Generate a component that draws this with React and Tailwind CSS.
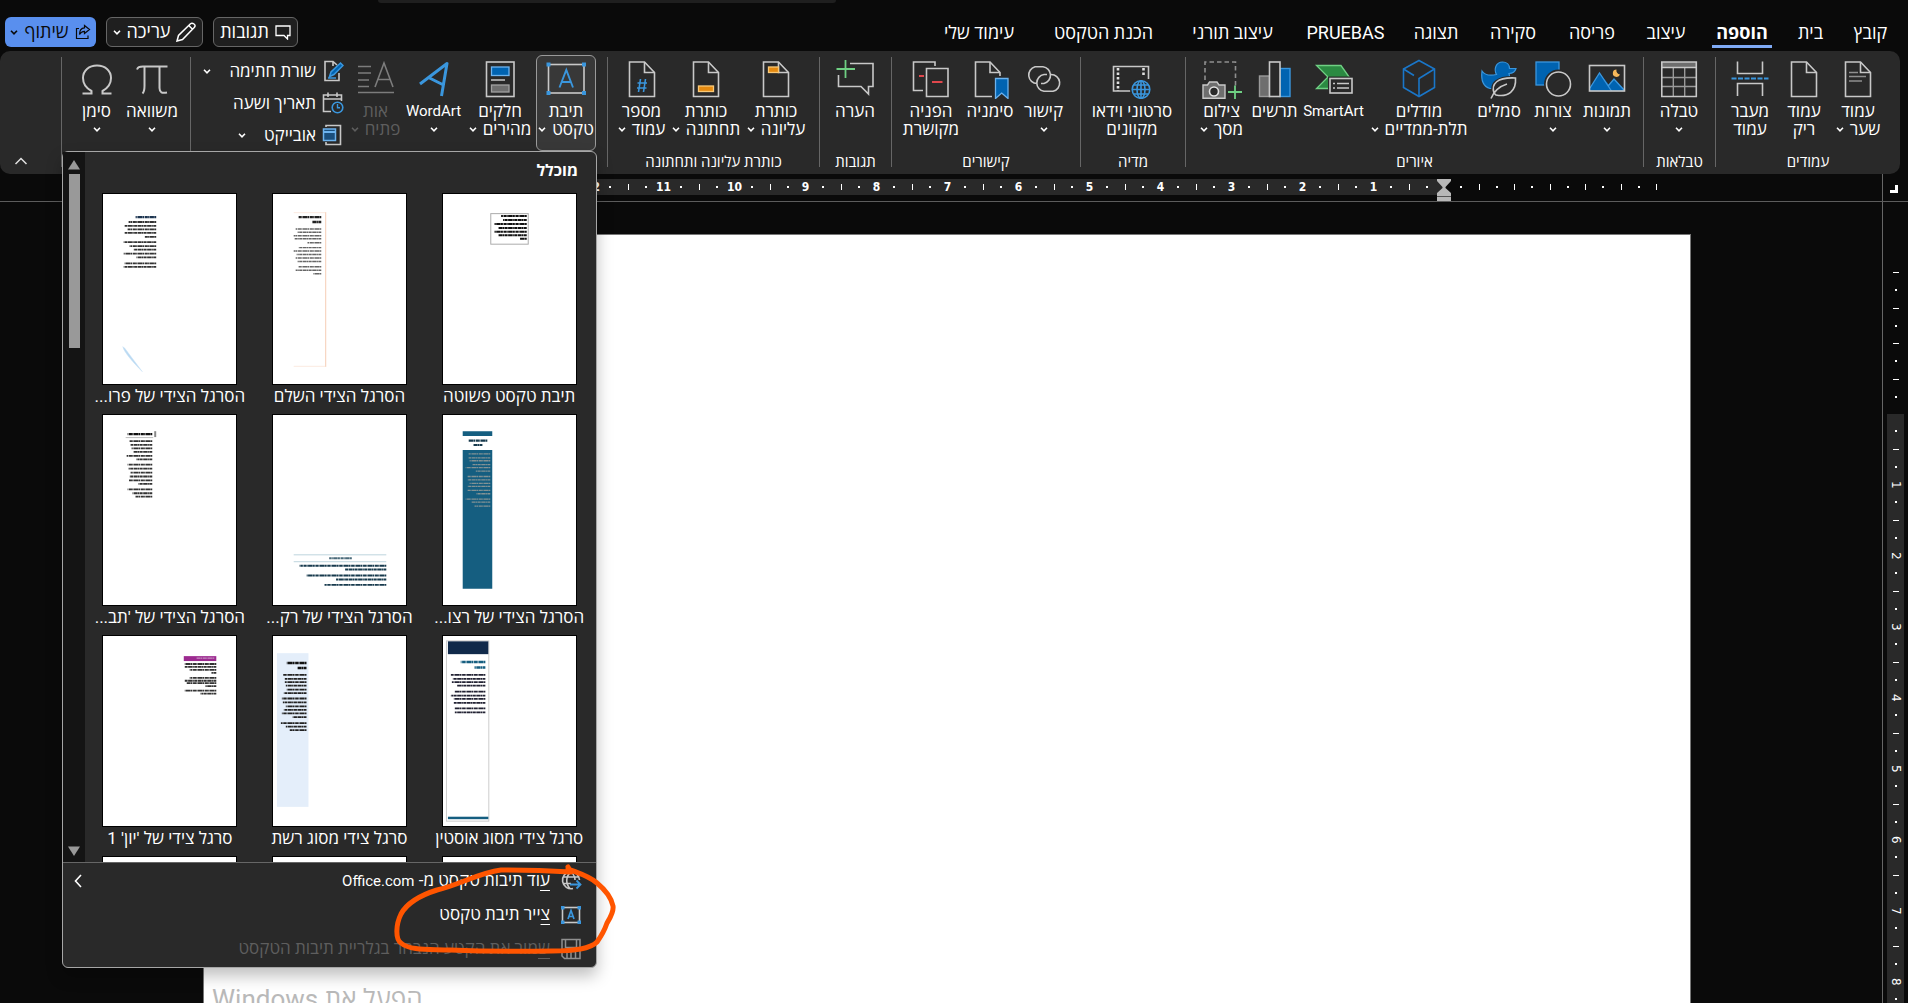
import React from "react";

const line = { fill: "none", stroke: "#c8c8c8", strokeWidth: 1.6 };
const blue = "#3a96dd";

const tabs = [
  { name: "קובץ", width: "w-[65px]" },
  { name: "בית", width: "w-[55px]" },
  { name: "הוספה", width: "w-[82px]", active: true },
  { name: "עיצוב", width: "w-[70px]" },
  { name: "פריסה", width: "w-[78px]" },
  { name: "סקירה", width: "w-[80px]" },
  { name: "תצוגה", width: "w-[74px]" },
  { name: "PRUEBAS", width: "w-[107px]" },
  { name: "עיצוב תורני", width: "w-[119px]" },
  { name: "הכנת הטקסט", width: "w-[139px]" },
  { name: "עימוד שלי", width: "w-[110px]" },
];

function Chevron() {
  return (
    <svg className="h-[5px] w-2 shrink-0" viewBox="0 0 8 5" aria-hidden="true">
      <path d="M1 .8 4 3.8 7 .8" fill="none" stroke="currentColor" strokeWidth="1.6" />
    </svg>
  );
}

function Icon({ children }) {
  return (
    <svg className="h-10 w-10 shrink-0" viewBox="0 0 40 40" aria-hidden="true">
      {children}
    </svg>
  );
}

function SmallIcon({ children }) {
  return (
    <svg className="h-[22px] w-[22px] shrink-0" viewBox="0 0 22 22" aria-hidden="true">
      {children}
    </svg>
  );
}

function Doc({ children }) {
  return (
    <Icon>
      <path d="M7.5 3H22.500L32.500 13.500V37.500H7.500Z" {...line} />
      <path d="M22.500 3V13.500H32.500" {...line} />
      {children}
    </Icon>
  );
}

const icons = {
  cover: (
    <Doc>
      <path d="M11 13.500H20M11 17.500H28M11 22H24" stroke="#8f8f8f" strokeWidth="1.600" />
    </Doc>
  ),
  blank: <Doc />,
  pageBreak: (
    <Icon>
      <path d="M7.500 2.500V14.500H32.500V2.500M7.500 37V24.500H32.500V37" {...line} />
      <path d="M1.500 19.500H38.500" stroke={blue} strokeWidth="1.800" strokeDasharray="5 1.500" />
    </Icon>
  ),
  table: (
    <Icon>
      <rect x="2.800" y="3" width="34.500" height="6" fill="#6e6e6e" />
      <path d="M14.300 9V37M25.700 9V37M3 18.500H37M3 27.500H37" stroke="#9a9a9a" strokeWidth="1.400" />
      <path d="M2.800 3H37.300V37.500H2.800ZM2.800 8.500H37.300" {...line} />
    </Icon>
  ),
  pictures: (
    <Icon>
      <path d="M3 32V29L12.500 14 22 26 27 20 37 30V32Z" fill="#0063b1" />
      <path d="M3 29 12.500 14 24.500 32M21.500 26.500 27 20 37 31" fill="none" stroke={blue} strokeWidth="1.300" />
      <path d="M29.500 10.500A3.700 3.700 0 1 0 33 15.500 4 4 0 0 1 29.500 10.500Z" fill="#f7b85a" />
      <rect x="2.500" y="6.500" width="35" height="25.500" {...line} />
    </Icon>
  ),
  shapes: (
    <Icon>
      <rect x="3" y="3" width="23" height="23" fill="#0063b1" stroke={blue} strokeWidth="1.300" />
      <circle cx="25.500" cy="25" r="12.500" fill="#292929" stroke="#292929" strokeWidth="4" />
      <circle cx="25.500" cy="25" r="12" {...line} />
    </Icon>
  ),
  symbols: (
    <Icon>
      <path d="M3 12C6 16.500 11 17 17.500 15.500 14.500 10 17 3 23.500 3 28 3 30.500 6 30.500 9.500L37 9.500C36 13 33.500 14.500 30 14.500 32 20 30 24 25 29.500H11C4 27.500 2 20 3 12Z" fill="#0063b1" stroke={blue} strokeWidth="1.200" />
      <path d="M15 34C12 25 18 18 36.500 19 37.500 32 29 38.500 17 36Z" fill="#292929" stroke="#292929" strokeWidth="4" />
      <path d="M15 34C12 25 18 18 36.500 19 37.500 32 29 38.500 17 36ZM12 39.500C15 32 20 27.500 28 25" {...line} />
    </Icon>
  ),
  models: (
    <Icon>
      <path d="M20 1.500 35.500 10V28.500L20 37.500 4.500 28.500V10Z" fill="none" stroke="#1a76c8" strokeWidth="1.600" />
      <path d="M35.500 10 20 19.500V37.500M4.500 10 15 16.500" fill="none" stroke="#1a76c8" strokeWidth="1.600" />
    </Icon>
  ),
  smartArt: (
    <Icon>
      <path d="M2.500 6.500H27L35.500 18.500 27 29.500H2.500L14 18Z" fill="#2b8a42" stroke="#6fd083" strokeWidth="1.300" />
      <rect x="14" y="17.500" width="26" height="18" fill="#292929" />
      <rect x="16" y="19.500" width="22" height="14.500" {...line} />
      <path d="M19 24.500H21M23 24.500H35M19 29H21M23 29H35" stroke="#c8c8c8" strokeWidth="1.400" />
    </Icon>
  ),
  chart: (
    <Icon>
      <rect x="4.500" y="17" width="10" height="20.500" fill="#6e6e6e" stroke="#9a9a9a" strokeWidth="1.400" />
      <rect x="25" y="9.500" width="10" height="28" fill="#0063b1" stroke={blue} strokeWidth="1.400" />
      <rect x="14.500" y="3" width="10.500" height="34.500" {...line} fill="#292929" />
    </Icon>
  ),
  screenshot: (
    <Icon>
      <path d="M3 21V3H33.500V27" fill="none" stroke="#8f8f8f" strokeWidth="1.600" strokeDasharray="4.500 3" />
      <path d="M1 26H5.500L7.500 23H15L17 26H23V39.300H1Z" fill="#6e6e6e" stroke="#c8c8c8" strokeWidth="1.400" />
      <circle cx="12" cy="32.500" r="4.500" fill="#292929" stroke="#e0e0e0" strokeWidth="1.600" />
      <path d="M33 26.500V40M26 33H40" stroke="#6fd083" strokeWidth="1.800" />
    </Icon>
  ),
  video: (
    <Icon>
      <path d="M19 32H1.500V7.500H36.500V20" {...line} />
      <path d="M6 9V32M31.500 9V18" stroke="#e0e0e0" strokeWidth="2.600" strokeDasharray="2.500 2" />
      <circle cx="29" cy="30.500" r="11" fill="#292929" />
      <g fill="none" stroke={blue} strokeWidth="1.600">
        <circle cx="29" cy="30.500" r="8.800" />
        <ellipse cx="29" cy="30.500" rx="4" ry="8.800" />
        <path d="M29 21.700V39.300M20.200 30.500H37.800M21.500 26H36.500M21.500 35H36.500" />
      </g>
    </Icon>
  ),
  link: (
    <Icon>
      <path d="M13 24.500A8.500 8.500 0 0 1 11 7.800H19A8.500 8.500 0 0 1 20 24.500H17" {...line} />
      <path d="M27 15.500A8.500 8.500 0 0 1 29 32.300H20A8.500 8.500 0 0 1 20 15.500H23" {...line} />
    </Icon>
  ),
  bookmark: (
    <Icon>
      <path d="M22 37.500H5.500V3H20L30 13.500V17" {...line} />
      <path d="M20 3V13.500H30" {...line} />
      <path d="M25.500 19.500H38V39.500L31.700 34 25.500 39.500Z" fill="#0063b1" stroke="#6db3ee" strokeWidth="1.300" />
    </Icon>
  ),
  crossRef: (
    <Icon>
      <path d="M12 31.500H2.500V3H24V7" {...line} />
      <path d="M15.500 9.500H37V37.500H15.500Z" {...line} />
      <path d="M8 17H13M21 23H31.500" stroke="#e0474c" strokeWidth="1.800" />
    </Icon>
  ),
  comment: (
    <Icon>
      <path d="M15 4.500H38V27.500H33.500V35L26 27.500H3.500V16" {...line} />
      <path d="M10.500 1V19M1.500 10H20" stroke="#6fd083" strokeWidth="1.800" />
    </Icon>
  ),
  header: (
    <Doc>
      <rect x="12.500" y="8" width="10" height="5.500" fill="#e58a10" stroke="#f8c878" strokeWidth="1.300" />
    </Doc>
  ),
  footer: (
    <Doc>
      <rect x="12.500" y="27" width="15" height="5.500" fill="#e58a10" stroke="#f8c878" strokeWidth="1.300" />
    </Doc>
  ),
  pageNumber: (
    <Doc>
      <path d="M18.500 20 16.500 33M23.500 20 21.500 33M15.500 24H25M15 29H24.500" stroke={blue} strokeWidth="1.600" />
    </Doc>
  ),
  textBox: (
    <Icon>
      <rect x="2.500" y="5.500" width="35.500" height="28.500" {...line} />
      <path d="M13.500 28.500 20.300 11 27 28.500M16 23H24.500" fill="none" stroke={blue} strokeWidth="1.900" />
      <path d="M.5 3.500h4v4h-4ZM36 3.500h4v4h-4ZM.5 32h4v4h-4ZM36 32h4v4h-4Z" fill={blue} />
    </Icon>
  ),
  quickParts: (
    <Icon>
      <rect x="6.500" y="3" width="27.500" height="34.500" {...line} />
      <rect x="11.500" y="8" width="17.500" height="8.500" fill="#0063b1" stroke="#6db3ee" strokeWidth="1.300" />
      <path d="M11 21H25" stroke="#c8c8c8" strokeWidth="1.500" />
      <rect x="11.500" y="26" width="17.500" height="7" fill="#6e6e6e" stroke="#a0a0a0" strokeWidth="1.300" />
    </Icon>
  ),
  wordArt: (
    <Icon>
      <path d="M6 25 33 4.500 27.500 37M14.500 18.500 29.500 26" fill="none" stroke={blue} strokeWidth="3" strokeLinejoin="round" />
    </Icon>
  ),
  dropCap: (
    <Icon>
      <path d="M2 7.500H15M2 14H15M2 21H13M2 27.500H13M2 33.500H38M19 28 28 4 37 28M22 20.500H34" fill="none" stroke="#7c7c7c" strokeWidth="1.600" />
    </Icon>
  ),
  equation: (
    <Icon>
      <path d="M5 10.500C6 8 7 7.500 11 7.500H35.500M12.500 7.500V27C12.500 31 12 33 10.500 34.500M27.500 7.500V29C27.500 33.500 30 34.500 35 33.500" {...line} strokeWidth="2" />
    </Icon>
  ),
  omega: (
    <Icon>
      <path d="M5.500 34.500H14.500V32C9 29 6 24.500 6 19 6 11.500 12 6.500 20 6.500S34 11.500 34 19C34 24.500 31 29 25.500 32V34.500H34.500" {...line} strokeWidth="2" />
    </Icon>
  ),
};

const groups = [
  {
    title: "עמודים",
    width: "w-[184px]",
    pad: "pr-[15px]",
    items: [
      { icon: "cover", lines: ["עמוד", "שער"], width: "w-[54px]", menu: true },
      { icon: "blank", lines: ["עמוד", "ריק"], width: "w-[54px]" },
      { icon: "pageBreak", lines: ["מעבר", "עמוד"], width: "w-[54px]" },
    ],
  },
  {
    title: "טבלאות",
    width: "w-[71px]",
    pad: "pr-[9px]",
    items: [{ icon: "table", lines: ["טבלה"], width: "w-[54px]", menu: true }],
  },
  {
    title: "איורים",
    width: "w-[457px]",
    pad: "pr-[9px]",
    items: [
      { icon: "pictures", lines: ["תמונות"], width: "w-[54px]", menu: true },
      { icon: "shapes", lines: ["צורות"], width: "w-[54px]", menu: true },
      { icon: "symbols", lines: ["סמלים"], width: "w-[54px]" },
      { icon: "models", lines: ["מודלים", "תלת-ממדיים"], width: "w-[106px]", menu: true },
      { icon: "smartArt", lines: ["SmartArt"], width: "w-[65px]", latin: true },
      { icon: "chart", lines: ["תרשים"], width: "w-[53px]" },
      { icon: "screenshot", lines: ["צילום", "מסך"], width: "w-[53px]", menu: true },
    ],
  },
  {
    title: "מדיה",
    width: "w-[104px]",
    pad: "pr-2",
    items: [{ icon: "video", lines: ["סרטוני וידאו", "מקוונים"], width: "w-[90px]" }],
  },
  {
    title: "קישורים",
    width: "w-[188px]",
    pad: "pr-[9px]",
    items: [
      { icon: "link", lines: ["קישור"], width: "w-[55px]", menu: true },
      { icon: "bookmark", lines: ["סימניה"], width: "w-[52px]" },
      { icon: "crossRef", lines: ["הפניה", "מקושרת"], width: "w-[66px]" },
    ],
  },
  {
    title: "תגובות",
    width: "w-[71px]",
    pad: "pr-2",
    items: [{ icon: "comment", lines: ["הערה"], width: "w-[56px]" }],
  },
  {
    title: "כותרת עליונה ותחתונה",
    width: "w-[211px]",
    pad: "pr-[9px]",
    items: [
      { icon: "header", lines: ["כותרת", "עליונה"], width: "w-[68px]", menu: true },
      { icon: "footer", lines: ["כותרת", "תחתונה"], width: "w-[72px]", menu: true },
      { icon: "pageNumber", lines: ["מספר", "עמוד"], width: "w-[57px]", menu: true },
    ],
  },
];

const textItems = [
  { icon: "textBox", lines: ["תיבת", "טקסט"], width: "w-[60px]", menu: true, open: true },
  { icon: "quickParts", lines: ["חלקים", "מהירים"], width: "w-[72px]", menu: true },
  { icon: "wordArt", lines: ["WordArt"], width: "w-[61px]", menu: true, latin: true },
  { icon: "dropCap", lines: ["אות", "פתיח"], width: "w-[55px]", menu: true, disabled: true },
];

const symbolItems = [
  { icon: "equation", lines: ["משוואה"], width: "w-[60px]", menu: true },
  { icon: "omega", lines: ["סימן"], width: "w-[51px]", menu: true },
];

function RibbonButton({ icon, lines, width, menu, open, disabled, latin }) {
  return (
    <button
      type="button"
      disabled={disabled}
      className={`flex h-24 shrink-0 flex-col items-center rounded-md border pt-[3px] whitespace-nowrap ${width} ${
        open ? "border-[#9a9a9a] bg-[#383838]" : "border-transparent"
      } ${disabled ? "text-[#5e5e5e]" : "text-white"}`}
    >
      {icons[icon]}
      <span className={`mt-[3px] leading-[18px] ${latin ? "text-[15px]" : "text-[17px]"}`}>{lines[0]}</span>
      <span className="flex h-[18px] items-center gap-1.5 text-[17px] leading-[18px]">
        {lines[1]}
        {menu && <Chevron />}
      </span>
    </button>
  );
}

function Divider() {
  return <div className="mt-1.5 mb-[7px] w-px shrink-0 bg-[#666]" />;
}

function Group({ title, width, pad, items, children }) {
  return (
    <div className={`flex shrink-0 flex-col pt-1 ${width}`}>
      <div className={`flex ${pad}`}>
        {items.map((item) => (
          <RibbonButton key={item.icon} {...item} />
        ))}
        {children}
      </div>
      {title && <div className="text-center text-[15px] leading-[22px] whitespace-nowrap">{title}</div>}
    </div>
  );
}

function SmallButton({ label, icon, menu }) {
  return (
    <button type="button" className="flex h-8 items-center text-[17px] leading-5 whitespace-nowrap">
      {icon}
      <span className="mr-1.5 ml-[18px]">{label}</span>
      {menu && <Chevron />}
    </button>
  );
}

function TitleBar() {
  return (
    <header className="flex h-12 items-start pt-3.5 pr-[5px] pl-[5px] text-lg">
      <nav className="flex">
        {tabs.map((tab) => (
          <button
            key={tab.name}
            type="button"
            className={`flex shrink-0 justify-center whitespace-nowrap ${tab.width} ${tab.active ? "font-bold" : ""}`}
          >
            <span
              className={`h-[31px] border-b-[3px] px-1 pt-[3px] leading-[25px] ${
                tab.active ? "border-[#7faaf5]" : "border-transparent"
              }`}
            >
              {tab.name}
            </span>
          </button>
        ))}
      </nav>
      <div className="mr-auto flex gap-2.5">
        <button type="button" className="flex h-[30px] w-[85px] items-center justify-center gap-1.5 rounded-md border border-[#666] bg-[#1f1f1f]">
          <svg className="h-4 w-4 shrink-0" viewBox="0 0 16 16" aria-hidden="true">
            <path d="M1 2H15V11.500H12.500V15L9 11.500H1Z" fill="none" stroke="#fff" strokeWidth="1.300" />
          </svg>
          תגובות
        </button>
        <button type="button" className="flex h-[30px] w-[97px] items-center justify-center gap-1.5 rounded-md border border-[#666] bg-[#1f1f1f]">
          <svg className="h-5 w-5 shrink-0" viewBox="0 0 20 20" aria-hidden="true">
            <path d="M1 19 2.500 13.500 14.500 1.800Q16 .500 18 2T18.200 5.500L6.500 17.500ZM12.800 3.500 16.500 7.200" fill="none" stroke="#fff" strokeWidth="1.500" />
          </svg>
          עריכה
          <Chevron />
        </button>
        <button type="button" className="flex h-[30px] w-[91px] items-center justify-center gap-1.5 rounded-md bg-[#598fee] text-[#0a0a0a]">
          <svg className="h-4 w-4 shrink-0" viewBox="0 0 16 16" aria-hidden="true">
            <path d="M4 4.500H1.500V14.500H13V11.500M9.500 1.500 14.500 5.500 9.500 9.500V7.300C7 7.300 5.500 8.500 4.500 10.500 4.500 6.500 6.500 4 9.500 3.800Z" fill="none" stroke="currentColor" strokeWidth="1.200" />
          </svg>
          שיתוף
          <Chevron />
        </button>
      </div>
    </header>
  );
}

function Ribbon() {
  return (
    <section className="mr-2 flex h-[123px] shrink-0 overflow-hidden rounded-[10px] bg-[#292929]">
      {groups.map((group) => (
        <React.Fragment key={group.title}>
          <Group {...group} />
          <Divider />
        </React.Fragment>
      ))}
      <Group items={textItems} width="w-[416px]" pad="pr-[11px]">
        <div className="flex flex-col items-start pr-1">
          <SmallButton
            label="שורת חתימה"
            menu
            icon={
              <SmallIcon>
                <path d="M17 13V20.500H3V1.500H11L15 5M11 1.500V6" {...line} />
                <path d="M7.500 16.500 9 12 18.500 3 21 5.500 12 14.500ZM6 18H14" fill="#0063b1" stroke={blue} strokeWidth="1.500" />
              </SmallIcon>
            }
          />
          <SmallButton
            label="תאריך ושעה"
            icon={
              <SmallIcon>
                <path d="M9 19.500H1.500V3H19.500V9M1.500 7H19.500M6 .5V5M15 .5V5" {...line} />
                <circle cx="15.500" cy="15.500" r="5.300" fill="#292929" stroke={blue} strokeWidth="1.600" />
                <path d="M15.500 12V15.800H18" fill="none" stroke={blue} strokeWidth="1.400" />
              </SmallIcon>
            }
          />
          <SmallButton
            label="אובייקט"
            menu
            icon={
              <SmallIcon>
                <path d="M4 3V1.500H18.500V20.500H4V18" {...line} />
                <rect x="1.500" y="5" width="12" height="11.500" fill="#1b4f7d" stroke="#6db3ee" strokeWidth="1.500" />
                <path d="M1.500 8H13.500" stroke="#6db3ee" strokeWidth="2" />
              </SmallIcon>
            }
          />
        </div>
      </Group>
      <Divider />
      <Group items={symbolItems} width="w-32" pad="pr-2" />
      <Divider />
      <button type="button" aria-label="כיווץ רצועת הכלים" className="mt-auto mr-auto mb-2 ml-3.5">
        <svg className="h-2.5 w-3.5" viewBox="0 0 14 10">
          <path d="M1.500 8 7 2.500 12.500 8" fill="none" stroke="#e0e0e0" strokeWidth="1.500" />
        </svg>
      </button>
    </section>
  );
}

function Mark({ kind, vertical, children }) {
  // every fourth mark is a pixel shorter so that one unit stays 71px long
  const last = kind === "number" || kind === "unit";
  const size = vertical ? (last ? "h-[17px] w-3.5" : "h-[18px] w-3.5") : last ? "w-[17px] h-4" : "w-[18px] h-4";
  const tick = vertical ? "h-px w-1.5" : "h-1.5 w-px";
  return (
    <span className={`flex shrink-0 items-center justify-center ${size}`}>
      {kind === "number" ? (
        <span className={vertical ? "[writing-mode:vertical-rl]" : ""}>{children}</span>
      ) : (
        <i className={`bg-white ${kind === "dot" ? "size-[2px]" : tick}`} />
      )}
    </span>
  );
}

function RulerUnit({ n, vertical }) {
  return (
    <>
      <Mark kind="dot" vertical={vertical} />
      <Mark kind="tick" vertical={vertical} />
      <Mark kind="dot" vertical={vertical} />
      <Mark kind="number" vertical={vertical}>
        {n}
      </Mark>
    </>
  );
}

function HorizontalRuler() {
  return (
    <div className="flex h-7 shrink-0 border-b border-[#5c5c5c]">
      <div className="flex w-[25px] items-start justify-center pt-[11px] pr-1">
        <i className="h-2 w-2 border-r-[3px] border-b-[3px] border-white" />
      </div>
      <div className="flex flex-1 overflow-hidden border-r border-[#666] pt-[5px] font-['DejaVu_Sans_Condensed','DejaVu_Sans',sans-serif] text-xs leading-4 font-bold">
        <div className="flex pr-[217px]">
          {/* the margin side mirrors the units, so it starts with the whole one */}
          {[1, 2, 3].map((n) => (
            <React.Fragment key={n}>
              <Mark kind="unit" />
              <Mark kind="dot" />
              <Mark kind="tick" />
              <Mark kind="dot" />
            </React.Fragment>
          ))}
        </div>
        <svg className="h-[22px] w-4 shrink-0" viewBox="0 0 16 22" aria-hidden="true">
          <rect width="9" height="16" fill="#292929" />
          <path d="M1 0H15V2L9.500 8V9L15 14V22H1V14L6.500 9V8L1 2Z" fill="#b8b8b8" />
          <path d="M1 17.500H15" stroke="#555" />
        </svg>
        <div className="flex h-4 bg-[#292929]">
          {Array.from({ length: 12 }, (_, i) => (
            <RulerUnit key={i} n={i + 1} />
          ))}
        </div>
      </div>
    </div>
  );
}

function VerticalRuler() {
  return (
    <div className="flex w-[25px] shrink-0 flex-col items-center overflow-hidden pt-[62px] font-['DejaVu_Sans'] text-xs leading-[14px]">
      <div className="flex w-[17px] flex-col items-center">
        {[1, 2].map((n) => (
          <React.Fragment key={n}>
            <Mark kind="unit" vertical />
            <Mark kind="dot" vertical />
            <Mark kind="tick" vertical />
            <Mark kind="dot" vertical />
          </React.Fragment>
        ))}
      </div>
      <div className="mt-2 flex w-[17px] flex-col items-center bg-[#292929] pt-2">
        {Array.from({ length: 8 }, (_, i) => (
          <RulerUnit key={i} n={i + 1} vertical />
        ))}
        <Mark kind="dot" vertical />
      </div>
    </div>
  );
}

// greeked body text, rows are [y, left, right]
function Greek({ rows, color = "#333", weight = 1.8 }) {
  return (
    <g stroke={color} strokeWidth={weight} fill="none">
      {rows.map(([y, x1, x2], i) => (
        <path
          key={y}
          d={`M${x2} ${y}H${x1}`}
          strokeDasharray={i % 2 ? "3 .4 1.500 .3 4 .5" : "2 .3 4.500 .4 1 .3 3 .6"}
        />
      ))}
    </g>
  );
}

const previews = {
  simple: (
    <>
      <rect x="48.500" y="19.500" width="38" height="31" fill="none" stroke="#aaa" />
      <Greek color="#111" weight={2} rows={[[22, 59, 85], [26, 61, 85], [30, 52, 85], [34, 56, 85], [38, 52, 85], [41.5, 56, 85], [45, 78, 85]]} />
    </>
  ),
  full: (
    <>
      <path d="M21 18.500H53M21 174.500H53" stroke="#fbeae0" />
      <path d="M53.500 18V175" stroke="#f6cdb4" />
      <Greek color="#222" weight={2.4} rows={[[23, 26, 49], [28, 40, 49]]} />
      <Greek color="#666" weight={1.5} rows={[[35, 23, 49], [38.5, 25, 49], [42, 21, 49], [45, 22, 49], [49, 35, 49], [54, 26, 49], [57.5, 21, 49], [61, 24, 49], [64.5, 23, 49], [68, 25, 49], [73.5, 26, 49], [77, 23, 49], [80.5, 41, 49]]} />
    </>
  ),
  facet: (
    <>
      <Greek color="#1c3450" weight={2.2} rows={[[23, 33, 54]]} />
      <Greek rows={[[28, 26, 54], [32, 22, 54], [35.5, 25, 54], [39, 22, 54], [43, 42, 54], [48.500, 21, 54], [52.500, 27, 54], [56, 31, 54], [60, 21, 54], [64, 34, 54], [70, 22, 54], [73.500, 21, 54]]} />
      <path d="M20 154.500 22 156 40 180Q22 162 20 154.500Z" fill="#b9d9f2" stroke="#cfe4f6" strokeWidth=".5" />
    </>
  ),
  stripes: (
    <>
      <path d="M20 16H50V21H20ZM20 35H50V176H20Z" fill="#155e80" />
      <Greek color="#173a4d" weight={2.2} rows={[[25.5, 26, 45], [30, 31, 40]]} />
      <Greek color="#839294" weight={1.3} rows={[[39, 26, 48], [43, 26, 48], [46, 27, 48], [50, 30, 48], [53, 23, 48], [56.5, 33, 48], [62, 25, 48], [65.5, 25, 48], [69, 27, 48], [72, 25, 48], [76, 25, 48], [79.5, 34, 48], [85, 23, 48], [88, 29, 48], [92, 32, 48]]} />
    </>
  ),
  strip: (
    <>
      <path d="M21 141.500H115M21 148.500H115" stroke="#bcd3dc" />
      <Greek color="#4a6a7a" weight={2} rows={[[145, 57, 80]]} />
      <Greek color="#173a4d" weight={2} rows={[[152.500, 27, 115], [156.500, 73, 115], [162.500, 34, 115], [166.500, 64, 115], [172, 52, 115]]} />
    </>
  ),
  thick: (
    <>
      <path d="M23 22.500H51" stroke="#bbb" />
      <rect x="52" y="16" width="2" height="6" fill="#888" />
      <Greek color="#111" weight={2.2} rows={[[19, 25, 50]]} />
      <Greek rows={[[26, 27, 50], [30, 28, 50], [33.500, 29, 50], [37, 31, 50], [41, 24, 50], [44.500, 34, 50], [50, 25, 50], [54, 26, 50], [58, 28, 50], [62, 27, 50], [66, 26, 50], [69.500, 36, 50], [75, 25, 50], [79, 30, 50], [82.500, 33, 50]]} />
    </>
  ),
  austin: (
    <>
      <rect x="3.500" y="4.500" width="43" height="183" fill="none" stroke="#ccc" />
      <rect x="5" y="5" width="41" height="13" fill="#10294a" />
      <rect x="5" y="183" width="41" height="2.500" fill="#155e80" />
      <Greek color="#155e80" weight={2.6} rows={[[26, 18, 43], [31.500, 32, 43]]} />
      <Greek color="#223" rows={[[39, 8, 43], [43, 10, 43], [46.500, 9, 43], [50, 14, 43], [56, 12, 43], [60, 8, 43], [63.500, 11, 43], [67.500, 11, 43], [73, 12, 43], [77, 12, 43]]} />
    </>
  ),
  grid: (
    <>
      <rect x="4" y="17" width="32" height="156" fill="#e4eefa" />
      <Greek color="#111" weight={2.4} rows={[[27, 14, 34], [32, 25, 34]]} />
      <Greek color="#222" rows={[[39, 10, 34], [43, 12, 34], [46.500, 12, 34], [50, 13, 34], [54, 14, 34], [57.500, 11, 34], [63, 9, 34], [67, 10, 34], [71, 13, 34], [74.500, 11, 34], [78, 9, 34], [82, 20, 34], [88, 8, 34], [91.500, 13, 34], [95, 17, 34]]} />
    </>
  ),
  ion: (
    <>
      <rect x="82" y="20" width="33" height="5" fill="#9c2a90" />
      <Greek color="#c58fc0" weight={1.3} rows={[[22, 95, 113]]} />
      <Greek rows={[[28, 83, 115], [31, 83, 115], [34, 88, 115], [37, 110, 115], [42, 88, 115], [45, 83, 115], [47.500, 85, 115], [50.500, 104, 115], [55, 83, 115], [58, 99, 115]]} />
    </>
  ),
};

const gallery = [
  { label: "תיבת טקסט פשוטה", preview: "simple" },
  { label: "הסרגל הצידי השלם", preview: "full" },
  { label: "הסרגל הצידי של פרו...", preview: "facet" },
  { label: "הסרגל הצידי של רצו...", preview: "stripes" },
  { label: "הסרגל הצידי של רק...", preview: "strip" },
  { label: "הסרגל הצידי של 'תב...", preview: "thick" },
  { label: "סרגל צידי מסוג אוסטין", preview: "austin" },
  { label: "סרגל צידי מסוג רשת", preview: "grid" },
  { label: "סרגל צידי של 'יון' 1", preview: "ion" },
  { label: "" },
  { label: "" },
  { label: "" },
];

function Gallery() {
  return (
    <div className="flex h-[710px] overflow-hidden">
      <div className="flex flex-1 flex-col">
        <h2 className="h-[41px] shrink-0 pr-[18px] text-base leading-[37px] font-bold">מוכלל</h2>
        <div className="grid grid-cols-3 pr-0.5">
          {gallery.map((item, i) => (
            <button key={i} type="button" className="flex h-[221px] flex-col items-center">
              <svg className="h-48 w-[135px] shrink-0 border border-black bg-white" viewBox="0 0 135 192" aria-hidden="true">
                {previews[item.preview]}
              </svg>
              <span className="text-[17px] leading-[22px] whitespace-nowrap">{item.label}</span>
            </button>
          ))}
        </div>
      </div>
      <div className="flex w-[22px] flex-col items-center bg-[#141414] pt-2 pb-1.5">
        <svg className="h-2.5 w-3" viewBox="0 0 12 10" aria-hidden="true">
          <path d="M6 0 12 9.500H0Z" fill="#999" />
        </svg>
        <div className="mt-1 h-[174px] w-[11px] bg-[#999]" />
        <svg className="mt-auto h-2.5 w-3" viewBox="0 0 12 10" aria-hidden="true">
          <path d="M6 10 12 .5H0Z" fill="#999" />
        </svg>
      </div>
    </div>
  );
}

function TextBoxMenu() {
  return (
    <div className="absolute top-[151px] left-[62px] w-[535px] rounded-md border border-[#a6a6a6] bg-[#292929] shadow-[0_8px_16px_rgba(0,0,0,0.25)]">
      <Gallery />
      <div className="border-t border-[#666] py-px text-[17px]">
        <button type="button" className="flex h-[34px] w-full items-center pr-3.5">
          <SmallIcon>
            <path d="M13 18.500A8.500 8.500 0 1 1 19.500 10M11 2C5.500 6 5.500 14 10 18.500M11 2C14 4.500 15 7 15 10M3 7H19M3 13.500H11" {...line} />
            <path d="M10 14.500H20M16.500 10.500 20.500 14.500 16.500 18.500" fill="none" stroke={blue} strokeWidth="1.800" />
          </SmallIcon>
          <span className="mr-2.5">
            <u className="underline-offset-4">ע</u>וד תיבות טקסט מ- <span className="text-[15px]">Office.com</span>
          </span>
          <svg className="mr-auto ml-[11px] h-3.5 w-2" viewBox="0 0 8 14" aria-hidden="true">
            <path d="M7 1 1.500 7 7 13" fill="none" stroke="#fff" strokeWidth="1.600" />
          </svg>
        </button>
        <button type="button" className="flex h-[34px] w-full items-center pr-3.5">
          <SmallIcon>
            <rect x="2.500" y="3.500" width="17" height="15" {...line} />
            <path d="M8 15 11 6.500 14 15M9 12.500H13" fill="none" stroke={blue} strokeWidth="1.700" />
            <path d="M1 2h3.500v3.500H1ZM17.500 2H21v3.500h-3.500ZM1 16.500h3.500V20H1ZM17.500 16.500H21V20h-3.500Z" fill={blue} />
          </SmallIcon>
          <span className="mr-2.5">
            <u className="underline-offset-4">צ</u>ייר תיבת טקסט
          </span>
        </button>
        <button type="button" disabled className="flex h-[34px] w-full items-center pr-3.5 text-[#5e5e5e]">
          <SmallIcon>
            <path d="M2 1.500H20V20.500H4.500L2 18ZM5.500 1.500V9.500H16.500V1.500M7 20.500V13.500H15.500V20.500M11 14V20.500" fill="none" stroke="#8f8f8f" strokeWidth="1.500" />
          </SmallIcon>
          <span className="mr-2.5">
            <u className="underline-offset-4">ש</u>מור את הקטע הנבחר בגלריית תיבות הטקסט
          </span>
        </button>
      </div>
      <svg className="pointer-events-none absolute top-[709px] left-[328px] h-24 w-[230px]" viewBox="391 861 230 96" aria-hidden="true">
        <path
          d="M568 867 571 872Q535 870 501 870C478 873 462 884 437 890 418 896 407 903 401 914 396 924 395 939 401 943 410 951 430 949 450 950Q500 952 552 951C575 951 590 949 597 942 602 935 605 929 607 923 610 918 614 912 613 906 611 896 603 888 597 883 589 876 578 873 568 869"
          fill="none"
          stroke="#ff5500"
          strokeWidth="5"
          strokeLinecap="round"
          strokeLinejoin="round"
        />
      </svg>
    </div>
  );
}

export default function App() {
  return (
    <div
      dir="rtl"
      className="relative flex h-screen flex-col overflow-hidden bg-[#0a0a0a] font-['Roboto','Open_Sans','Noto_Sans',sans-serif] text-white"
    >
      <div className="mr-auto ml-[378px] h-[3px] w-[458px] shrink-0 rounded-b bg-[#1f1f1f]" />
      <TitleBar />
      <Ribbon />
      <HorizontalRuler />
      <div className="flex min-h-0 flex-1">
        <VerticalRuler />
        <main className="flex flex-1 border-r border-[#666] pt-8 pr-[191px] pl-[203px]">
          <div className="flex flex-1 items-end overflow-hidden border border-b-0 border-[#777] bg-white">
            <p className="mr-auto -mb-3 ml-2 text-[26px] leading-8 text-[#b9b9b9]">הפעל את Windows</p>
          </div>
        </main>
      </div>
      <TextBoxMenu />
    </div>
  );
}
